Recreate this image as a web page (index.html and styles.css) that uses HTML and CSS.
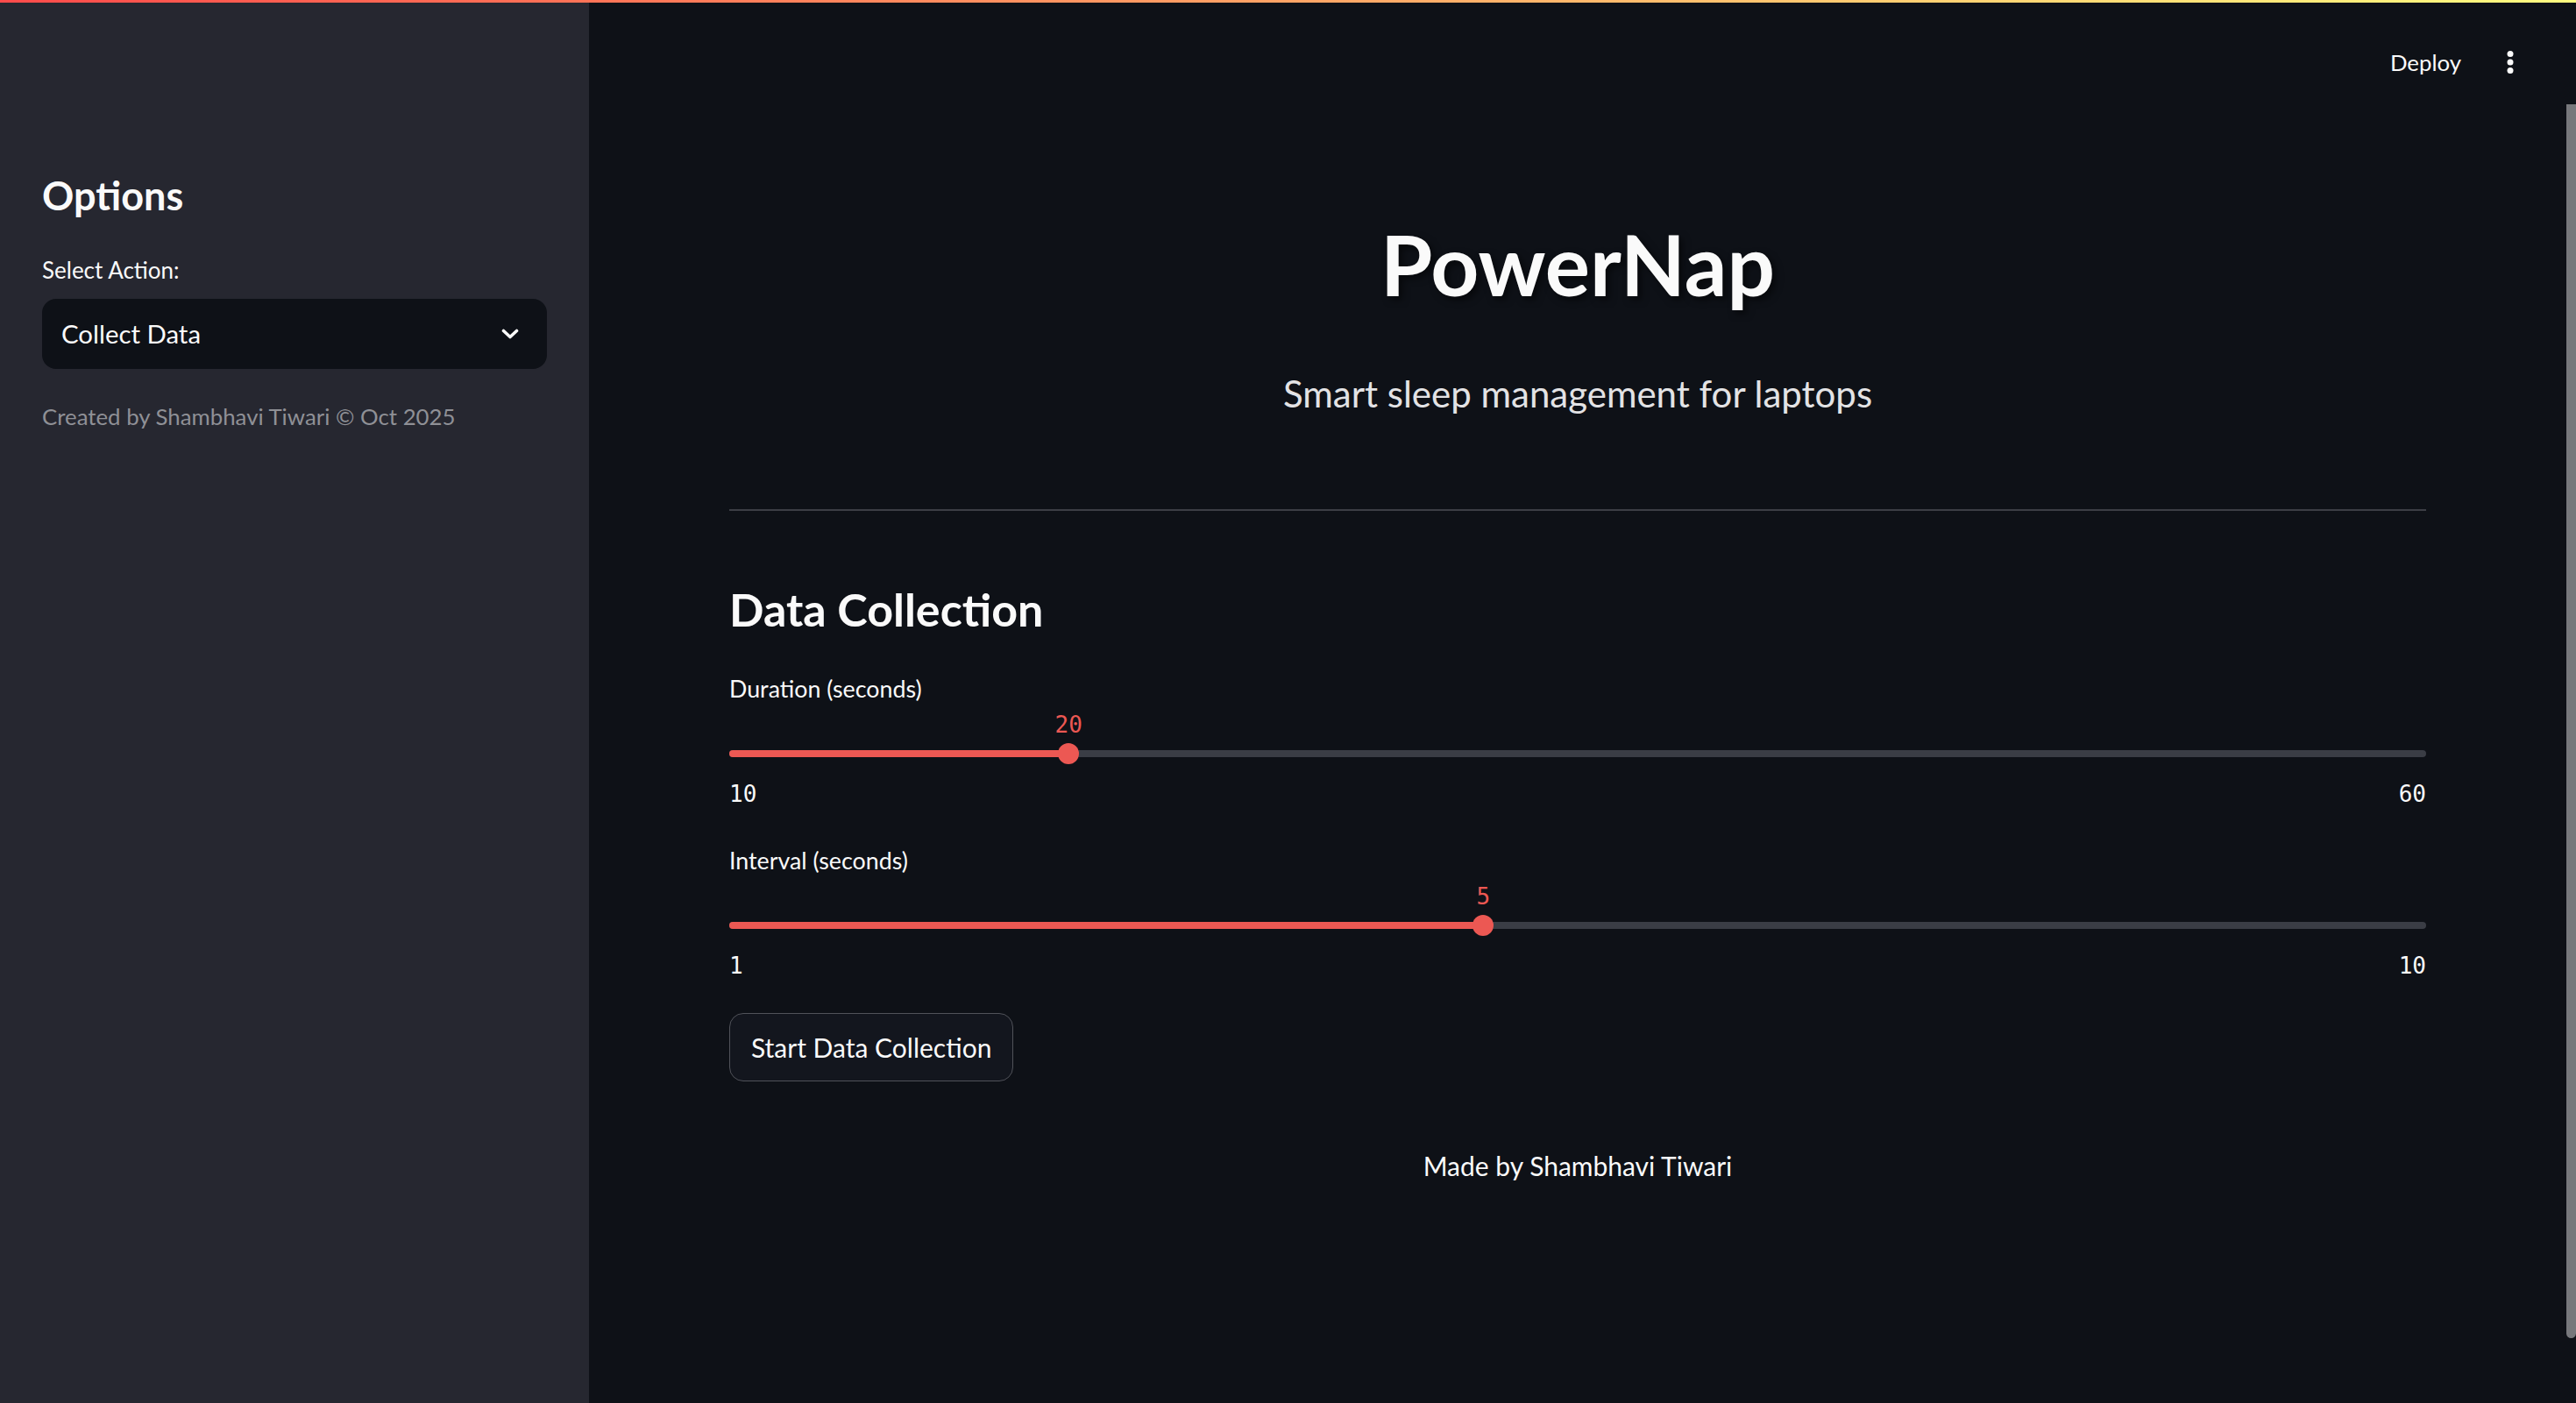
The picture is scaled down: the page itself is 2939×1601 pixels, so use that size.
FILE: index.html
```html
<!DOCTYPE html>
<html lang="en">
<head>
<meta charset="utf-8">
<title>PowerNap</title>
<link rel="stylesheet" href="styles.css">
</head>
<body>
<div class="decoration"></div>
<div class="app">
  <aside class="sidebar">
    <h2 class="side-title">Options</h2>
    <div class="side-label">Select Action:</div>
    <div class="select">
      <span class="select-value">Collect Data</span>
      <svg class="chevron" width="20" height="12" viewBox="0 0 20 12"><path d="M2.5 2.5 L10 9.5 L17.5 2.5" fill="none" stroke="#fafafa" stroke-width="3.6" stroke-linecap="round" stroke-linejoin="round"/></svg>
    </div>
    <div class="side-caption">Created by Shambhavi Tiwari © Oct 2025</div>
  </aside>
  <main class="main">
    <header class="topbar">
      <span class="deploy">Deploy</span>
      <svg class="menu-dots" width="8" height="26" viewBox="0 0 8 26"><circle cx="4" cy="3.5" r="3.5" fill="#fafafa"/><circle cx="4" cy="13" r="3.5" fill="#fafafa"/><circle cx="4" cy="22.5" r="3.5" fill="#fafafa"/></svg>
    </header>
    <div class="content">
      <h1 class="title">PowerNap</h1>
      <p class="subtitle">Smart sleep management for laptops</p>
      <div class="divider"></div>
      <h3 class="section">Data Collection</h3>

      <div class="field-label">Duration (seconds)</div>
      <div class="slider">
        <div class="value-row"><span class="value" style="left:20%">20</span></div>
        <div class="track-row">
          <div class="track"><div class="fill" style="width:20%"></div><div class="thumb" style="left:20%"></div></div>
        </div>
        <div class="ticks"><span>10</span><span>60</span></div>
      </div>

      <div class="field-label gap">Interval (seconds)</div>
      <div class="slider">
        <div class="value-row"><span class="value" style="left:44.444%">5</span></div>
        <div class="track-row">
          <div class="track"><div class="fill" style="width:44.444%"></div><div class="thumb" style="left:44.444%"></div></div>
        </div>
        <div class="ticks"><span>1</span><span>10</span></div>
      </div>

      <button class="btn">Start Data Collection</button>

      <p class="footer">Made by Shambhavi Tiwari</p>
    </div>
    <div class="scrollbar"></div>
  </main>
</div>
</body>
</html>
```
FILE: styles.css
```css
* { box-sizing: border-box; }
html, body { margin: 0; padding: 0; }
body {
  background: #0e1117;
  color: #fafafa;
  font-family: "Lato", "Noto Sans", sans-serif;
  width: 2939px;
  height: 1601px;
  overflow: hidden;
  position: relative;
}
.decoration {
  position: absolute;
  top: 0; left: 0; right: 0;
  height: 3px;
  background: linear-gradient(90deg, rgb(255, 75, 75), rgb(255, 253, 128));
  z-index: 5;
}
.app { display: flex; height: 1601px; }

/* Sidebar */
.sidebar {
  width: 672px;
  flex: 0 0 672px;
  background: #262730;
  padding: 193px 48px 0 48px;
}
.side-title {
  margin: 0;
  font-size: 45px;
  line-height: 60px;
  font-weight: 700;
}
.side-label {
  margin-top: 35px;
  font-size: 26px;
  line-height: 40px;
}
.select {
  margin-top: 13px;
  height: 80px;
  border-radius: 16px;
  background: #0e1117;
  display: flex;
  align-items: center;
  justify-content: space-between;
  padding: 0 32px 0 22px;
}
.select-value { font-size: 29.4px; line-height: 40px; }
.chevron { display: block; }
.side-caption {
  margin-top: 34px;
  font-size: 25.8px;
  line-height: 40px;
  color: #8f9096;
}

/* Main */
.main { flex: 1; position: relative; }
.topbar {
  height: 120px;
  display: flex;
  justify-content: flex-end;
  align-items: flex-start;
  padding: 51px 71px 0 0;
}
.deploy { font-size: 25.8px; line-height: 40px; margin-right: 52px; }
.menu-dots { display: block; margin-top: 7px; }
.content { padding: 0 171px 0 160px; }
.title {
  margin: 121px 0 0;
  text-align: center;
  font-size: 96px;
  line-height: 120px;
  font-weight: 700;
  text-shadow: 4px 4px 8px rgba(0, 0, 0, 0.55);
}
.subtitle {
  margin: 58px 0 0;
  text-align: center;
  font-size: 42px;
  line-height: 60px;
  color: #e3e3e5;
}
.divider { margin-top: 102px; height: 2px; background: #3c3e45; }
.section {
  margin: 77px 0 0;
  font-size: 52px;
  line-height: 70px;
  font-weight: 700;
}
.field-label { margin-top: 36px; font-size: 26.8px; line-height: 40px; }
.field-label.gap { margin-top: 38px; }
.slider { font-family: "DejaVu Sans Mono", monospace; }
.value-row { position: relative; height: 36px; margin-top: 3px; }
.value {
  position: absolute;
  top: 0;
  transform: translateX(-50%);
  font-size: 26px;
  line-height: 36px;
  color: #ec5853;
}
.track-row { height: 24px; margin-top: 3px; display: flex; align-items: center; }
.track {
  position: relative;
  width: 100%;
  height: 8px;
  border-radius: 4px;
  background: #3a3d45;
}
.fill { height: 100%; border-radius: 4px; background: #ec5853; }
.thumb {
  position: absolute;
  top: 50%;
  width: 24px;
  height: 24px;
  margin: -12px 0 0 -12px;
  border-radius: 50%;
  background: #ec5853;
}
.ticks {
  margin-top: 16px;
  display: flex;
  justify-content: space-between;
  font-size: 26px;
  line-height: 36px;
  color: #fafafa;
}
.btn {
  margin-top: 36px;
  height: 78px;
  padding: 0 24px;
  border: 1px solid #505259;
  border-radius: 16px;
  background: #13161e;
  color: #fafafa;
  font-family: "Lato", "Noto Sans", sans-serif;
  font-size: 30px;
  line-height: 40px;
  display: flex;
  align-items: center;
}
.footer {
  margin: 76px 0 0;
  text-align: center;
  font-size: 30px;
  line-height: 40px;
}
.scrollbar {
  position: absolute;
  right: 0;
  top: 119px;
  width: 11px;
  height: 1408px;
  background: #77787c;
  border-radius: 0 0 6px 6px;
}
```
